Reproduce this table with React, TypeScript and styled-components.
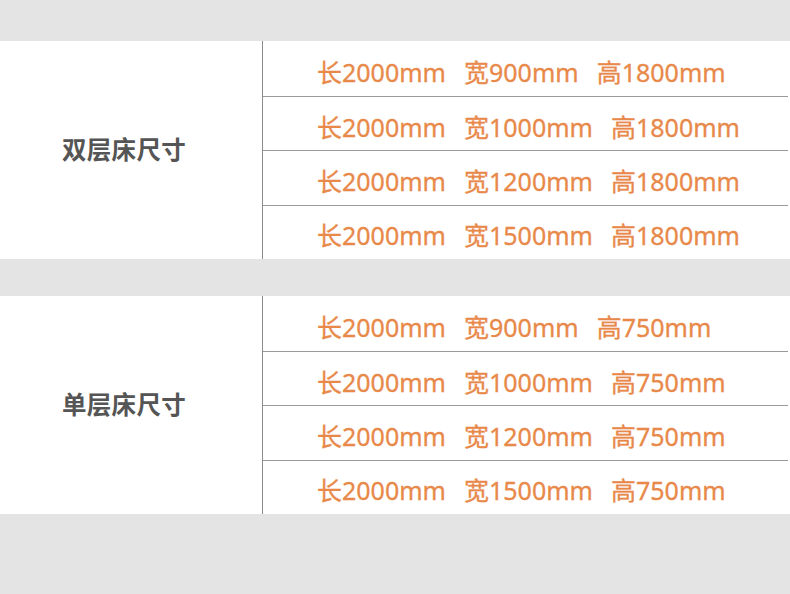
import React from "react";
import styled, { createGlobalStyle } from "styled-components";

const GlobalStyle = createGlobalStyle`
  html, body {
    margin: 0;
    padding: 0;
    background: #e4e4e4;
  }
  body {
    font-family: "Noto Sans", "Noto Sans CJK SC", sans-serif;
  }
`;

type Size = { l: string; w: string; h: string };

const tables: { title: string; rows: Size[] }[] = [
  {
    title: "双层床尺寸",
    rows: [
      { l: "2000", w: "900", h: "1800" },
      { l: "2000", w: "1000", h: "1800" },
      { l: "2000", w: "1200", h: "1800" },
      { l: "2000", w: "1500", h: "1800" },
    ],
  },
  {
    title: "单层床尺寸",
    rows: [
      { l: "2000", w: "900", h: "750" },
      { l: "2000", w: "1000", h: "750" },
      { l: "2000", w: "1200", h: "750" },
      { l: "2000", w: "1500", h: "750" },
    ],
  },
];

const App = () => {
  return (
    <Page>
      <GlobalStyle />
      {tables.map((t) => (
        <Table key={t.title}>
          <Label>{t.title}</Label>
          <Rows>
            {t.rows.map((r, i) => (
              <Row key={i} $first={i === 0}>
                <Dim>长{r.l}mm</Dim>
                <Dim>宽{r.w}mm</Dim>
                <Dim>高{r.h}mm</Dim>
              </Row>
            ))}
          </Rows>
        </Table>
      ))}
    </Page>
  );
};

export default App;

const Page = styled.div`
  width: 790px;
  height: 594px;
  padding-top: 41px;
  box-sizing: border-box;
  display: flex;
  flex-direction: column;
  gap: 37px;
  background: #e4e4e4;
`;

const Table = styled.div`
  display: grid;
  grid-template-columns: 263px 1fr;
  background: #fff;
  height: 218px;
`;

const Label = styled.div`
  display: flex;
  align-items: center;
  padding-left: 62px;
  padding-bottom: 4px;
  font-family: "Noto Sans CJK SC", sans-serif;
  font-size: 24.5px;
  font-weight: 700;
  color: #555;
  letter-spacing: 0.3px;
  border-right: 1px solid #8c8c8c;
`;

const Rows = styled.div`
  display: flex;
  flex-direction: column;
  margin-right: 2px;
`;

const Row = styled.div<{ $first: boolean }>`
  flex: ${(p) => (p.$first ? "56" : "54")} 0 0;
  display: flex;
  align-items: center;
  gap: 18px;
  padding-left: 54px;
  padding-top: 4px;
  box-sizing: border-box;
  border-bottom: 1px solid #9a9a9a;
  &:last-child {
    border-bottom: none;
  }
`;

const Dim = styled.span`
  font-size: 25px;
  font-weight: 400;
  color: #e8894a;
  -webkit-text-stroke: 0.3px #e8894a;
  white-space: nowrap;
`;
